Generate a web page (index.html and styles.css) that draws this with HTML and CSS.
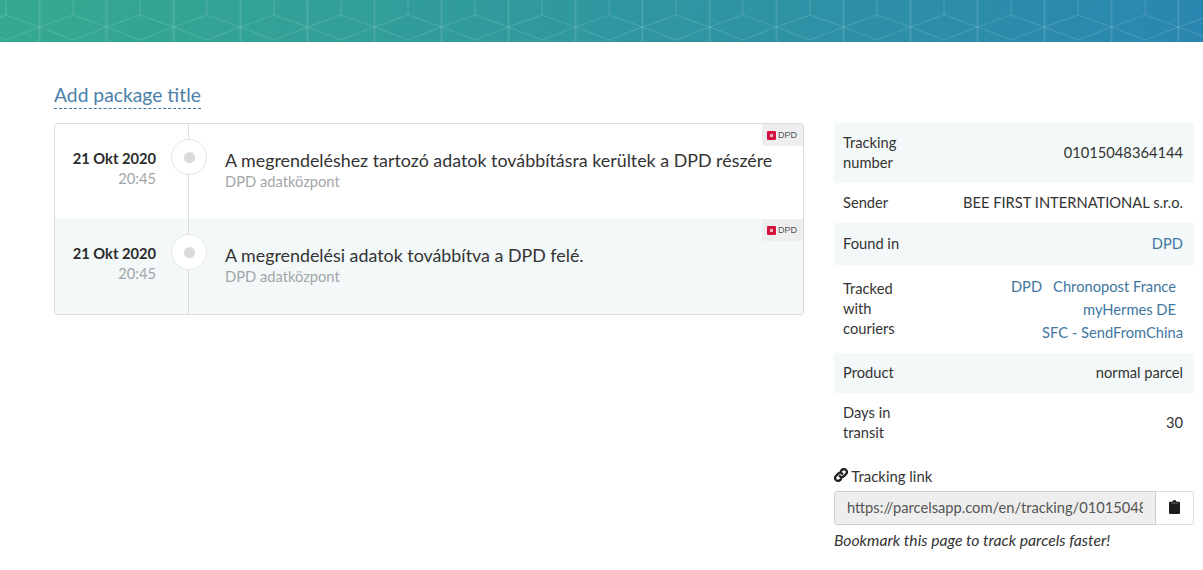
FILE: index.html
```html
<!DOCTYPE html>
<html lang="en">
<head>
    <meta charset="UTF-8">
    <title>Parcel tracking</title>
    <link rel="stylesheet" href="styles.css">
</head>
<body>
    <header class="banner">
        <svg class="banner-lines" width="100%" height="42">
            <defs>
                <pattern id="hex" width="67" height="80" patternUnits="userSpaceOnUse" x="39.500" y="-13">
                    <path d="M0 0V80M67 0V80" fill="none" stroke="#fff" stroke-opacity=".22"/>
                    <path d="M33.500 0V28M0 40L33.500 28L67 40M0 40L33.500 53L67 40" fill="none" stroke="#fff" stroke-opacity=".14"/>
                </pattern>
            </defs>
            <rect width="100%" height="42" fill="url(#hex)"/>
        </svg>
    </header>

    <main class="page">
        <section class="left-col">
            <h2 class="package-title"><a href="#">Add package title</a></h2>
            <div class="events">
                <div class="event">
                    <div class="event-date">
                        <b>21 Okt 2020</b>
                        <span>20:45</span>
                    </div>
                    <div class="event-dot"><i></i></div>
                    <div class="event-text">
                        <div class="event-title">A megrendeléshez tartozó adatok továbbításra kerültek a DPD részére</div>
                        <div class="event-place">DPD adatközpont</div>
                    </div>
                    <div class="carrier"><em></em>DPD</div>
                </div>
                <div class="event event-alt">
                    <div class="event-date">
                        <b>21 Okt 2020</b>
                        <span>20:45</span>
                    </div>
                    <div class="event-dot"><i></i></div>
                    <div class="event-text">
                        <div class="event-title">A megrendelési adatok továbbítva a DPD felé.</div>
                        <div class="event-place">DPD adatközpont</div>
                    </div>
                    <div class="carrier"><em></em>DPD</div>
                </div>
            </div>
        </section>

        <aside class="right-col">
            <table class="info">
                <tr class="row-a"><td class="name">Tracking number</td><td class="val">01015048364144</td></tr>
                <tr><td class="name">Sender</td><td class="val">BEE FIRST INTERNATIONAL s.r.o.</td></tr>
                <tr class="row-a row-found"><td class="name">Found in</td><td class="val"><a href="#">DPD</a></td></tr>
                <tr>
                    <td class="name">Tracked with couriers</td>
                    <td class="val couriers">
                        <a href="#">DPD</a><a href="#">Chronopost France</a><br>
                        <a href="#">myHermes DE</a><br>
                        <a class="last" href="#">SFC - SendFromChina</a>
                    </td>
                </tr>
                <tr class="row-a"><td class="name">Product</td><td class="val">normal parcel</td></tr>
                <tr><td class="name">Days in transit</td><td class="val">30</td></tr>
            </table>

            <div class="link-label">
                <svg width="14" height="14" viewBox="0 0 24 24" fill="none" stroke="#222" stroke-width="4" stroke-linecap="round">
                    <path d="M10 14a5 5 0 0 0 7 0l4-4a5 5 0 0 0-7-7l-2 2"/>
                    <path d="M14 10a5 5 0 0 0-7 0l-4 4a5 5 0 0 0 7 7l2-2"/>
                </svg>
                Tracking link
            </div>
            <div class="link-box">
                <input type="text" readonly value="https://parcelsapp.com/en/tracking/01015048364144">
                <button type="button">
                    <svg width="11" height="14" viewBox="0 0 11 14">
                        <path fill="#1c1c1c" d="M1.200 1.800H3.400C3.600 .8 4.400 0 5.500 0s1.900 .8 2.100 1.800h2.200C10.500 1.800 11 2.300 11 3v9.800c0 .7-.5 1.200-1.200 1.200H1.200C.5 14 0 13.500 0 12.800V3c0-.7.5-1.200 1.200-1.200z"/>
                        <rect x="2.500" y="2.600" width="6" height="1" fill="#666"/>
                    </svg>
                </button>
            </div>
            <p class="hint">Bookmark this page to track parcels faster!</p>
        </aside>
    </main>
</body>
</html>
```

FILE: styles.css
```css
*{
    margin: 0;
    padding: 0;
    box-sizing: border-box;
}
body{
    font-family: "Lato", "Open Sans", sans-serif;
    font-size: 14.7px;
    color: #333;
    background-color: white;
    overflow: hidden;
}
a{
    color: #41779f;
    text-decoration: none;
}
.banner{
    height: 42px;
    background: linear-gradient(100deg, #35a98f 0%, #2a86b0 100%);
}
.banner-lines{
    display: block;
}
.page{
    display: flex;
    align-items: flex-start;
    gap: 30px;
    padding: 0 9px 0 54px;
}
.left-col{
    width: 750px;
}
.package-title{
    height: 81px;
    padding-top: 40px;
    font-size: 19.3px;
    font-weight: 400;
    line-height: 26px;
}
.package-title a{
    display: inline-block;
    color: #4a7fa9;
    border-bottom: 1px dashed #3a76a5;
}
.events{
    border: 1px solid #dcdcdc;
    border-radius: 3px;
    overflow: hidden;
}
.event{
    display: flex;
    position: relative;
    height: 95px;
}
.event-alt{
    background-color: #f3f8f8;
}
.event-date{
    width: 101px;
    padding-top: 24px;
    text-align: right;
    line-height: 20px;
}
.event-date b{
    display: block;
    color: #2b2b2b;
}
.event-date span{
    color: #a3a6a8;
}
.event-dot{
    position: relative;
    width: 36px;
    margin: 0 0 0 15px;
    flex: none;
}
.event-dot::before{
    content: "";
    position: absolute;
    left: 17px;
    top: 0;
    bottom: 0;
    width: 1px;
    background-color: #dcdcdc;
}
.event-alt .event-dot::before{
    bottom: -1px;
}
.event-dot i{
    position: absolute;
    left: 0;
    top: 15px;
    width: 36px;
    height: 36px;
    border: 1px solid #e5e5e5;
    border-radius: 50%;
    background-color: white;
}
.event-dot i::after{
    content: "";
    position: absolute;
    left: 11.500px;
    top: 11.500px;
    width: 11px;
    height: 11px;
    border-radius: 50%;
    background-color: #dadada;
}
.event-text{
    padding: 25px 0 0 18px;
}
.event-title{
    font-size: 17.85px;
    line-height: 22px;
    color: #333;
}
.event-place{
    line-height: 20px;
    color: #a3a6a8;
}
.carrier{
    position: absolute;
    right: 0;
    top: 0;
    height: 22px;
    padding: 0 6px 0 5px;
    display: flex;
    align-items: center;
    gap: 2px;
    font-family: "Liberation Sans", sans-serif;
    font-size: 9px;
    color: #555;
    background-color: #eee;
    border-bottom-left-radius: 3px;
}
.carrier em{
    width: 9px;
    height: 9px;
    border: 3px solid #d4143f;
    border-radius: 1px;
    background-color: #f2b5c3;
}
.right-col{
    width: 360px;
    padding-top: 81px;
}
.info{
    width: 100%;
    border-collapse: collapse;
    line-height: 20px;
}
.info td{
    padding: 9px 11px 11px 9px;
}
.row-a{
    background-color: #f3f8f8;
}
.info .row-found td{
    padding: 10px 11px 12px 9px;
}
.name{
    width: 80px;
    color: #333;
}
.val{
    text-align: right;
    color: #333;
}
.info .couriers{
    padding: 10px 11px 9px 9px;
}
.couriers a{
    margin-right: 7px;
    line-height: 23px;
}
.couriers a + a{
    margin-left: 4px;
}
.couriers .last{
    margin-right: 0;
}
.link-label{
    margin-top: 13px;
    font-size: 14.9px;
    line-height: 20px;
}
.link-box{
    display: flex;
    height: 34px;
    margin-top: 5px;
}
.link-box input{
    flex: 1;
    min-width: 0;
    padding: 0 12px 2px;
    font: inherit;
    color: #555;
    background-color: #eee;
    border: 1px solid #ccc;
    border-radius: 3px 0 0 3px;
}
.link-box button{
    width: 38px;
    background-color: white;
    border: 1px solid #ddd;
    border-left: 0;
    border-radius: 0 3px 3px 0;
}
.hint{
    margin-top: 4px;
    font-size: 15.7px;
    font-style: italic;
    line-height: 22px;
}
```
